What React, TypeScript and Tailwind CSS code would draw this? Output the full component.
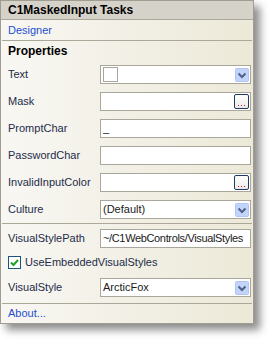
import React from 'react';

const font = { fontFamily: '"Liberation Sans", Arial, sans-serif' };

const Chevron = () => (
  <svg width="14" height="14" viewBox="0 0 14 14" className="block">
    <rect x="0.5" y="0.5" width="13" height="13" rx="1" fill="#c3d4fb" stroke="#b1c5f5" />
    <polyline points="3.5,5.5 7,9 10.5,5.5" fill="none" stroke="#4d6185" strokeWidth="2" />
  </svg>
);

const Ellipsis = () => (
  <div className="w-[15px] h-[15px] rounded-[2px] border border-[#1f3a64] bg-gradient-to-b from-white to-[#eceae2] flex items-end justify-center pb-[2px] gap-[2px]">
    <span className="w-[1px] h-[1px] bg-[#b01872]" />
    <span className="w-[1px] h-[1px] bg-[#b01872]" />
    <span className="w-[1px] h-[1px] bg-[#b01872]" />
  </div>
);

const Box: React.FC<{ children?: React.ReactNode; right?: React.ReactNode }> = ({ children, right }) => (
  <div className="w-[151px] h-[19px] bg-white border border-[#a9a79c] flex items-center pl-[2px] pr-[1px] overflow-hidden">
    <div className="flex-1 overflow-hidden whitespace-nowrap text-[11px] text-[#1a1a1a] leading-none">{children}</div>
    {right}
  </div>
);

const Row: React.FC<{ label: string; h?: string; children?: React.ReactNode }> = ({ label, h = 'h-[27px]', children }) => (
  <div className={`flex items-center ${h} pl-[7px]`}>
    <div className="w-[92px] text-[11px] text-[#232c4a]">{label}</div>
    {children}
  </div>
);

const Sep = () => <div className="h-[1px] mx-[1px] bg-[#aca899]" />;

export default function App() {
  return (
    <div className="w-[271px] h-[342px] bg-white" style={font}>
      <div className="w-[254px] border border-[#a09c90] shadow-[6px_6px_8px_rgba(0,0,0,0.45)] bg-gradient-to-r from-[#f8f7f3] to-[#ece9d8]">
        <div className="h-[19px] bg-[#d5d2ca] border-b border-[#aca899] flex items-center pl-[7px] text-[12px] font-bold text-black">
          C1MaskedInput Tasks
        </div>
        <div className="h-[20px] flex items-center pl-[7px] text-[11px] text-[#1e4fd0]">Designer</div>
        <Sep />
        <div className="h-[20px] flex items-center pl-[7px] text-[12px] font-bold text-black">Properties</div>
        <Row label="Text">
          <Box right={<Chevron />}>
            <div className="w-[15px] h-[15px] border border-[#a9a79c] bg-white" />
          </Box>
        </Row>
        <Row label="Mask">
          <Box right={<Ellipsis />} />
        </Row>
        <Row label="PromptChar">
          <Box>_</Box>
        </Row>
        <Row label="PasswordChar">
          <Box />
        </Row>
        <Row label="InvalidInputColor">
          <Box right={<Ellipsis />} />
        </Row>
        <Row label="Culture">
          <Box right={<Chevron />}>(Default)</Box>
        </Row>
        <Sep />
        <Row label="VisualStylePath" h="h-[28px]">
          <Box>
            <span className="tracking-[-0.35px]">~/C1WebControls/VisualStyles</span>
          </Box>
        </Row>
        <div className="h-[20px] flex items-center pl-[7px] gap-[4px]">
          <div className="w-[13px] h-[13px] border border-[#1c5180] bg-white flex items-center justify-center">
            <svg width="9" height="9" viewBox="0 0 9 9">
              <polyline points="1,4.5 3.5,7 8,2" fill="none" stroke="#21a121" strokeWidth="2" />
            </svg>
          </div>
          <span className="text-[11px] text-[#232c4a]">UseEmbeddedVisualStyles</span>
        </div>
        <Row label="VisualStyle" h="h-[31px]">
          <Box right={<Chevron />}>ArcticFox</Box>
        </Row>
        <Sep />
        <div className="h-[19px] flex items-center pl-[7px] text-[11px] text-[#1e4fd0]">About...</div>
      </div>
    </div>
  );
}
